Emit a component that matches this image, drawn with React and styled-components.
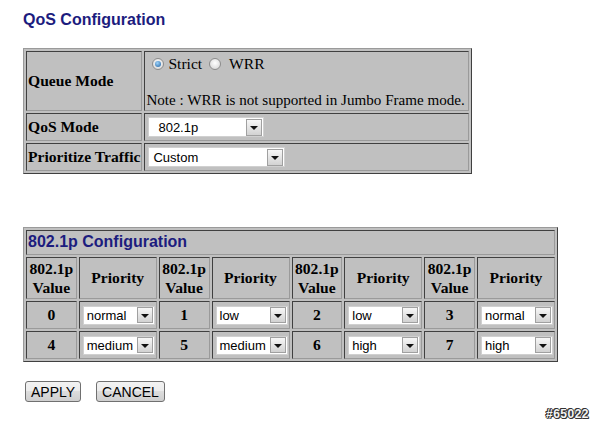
import React from 'react';
import styled, { createGlobalStyle, css } from 'styled-components';

const GlobalStyle = createGlobalStyle`
  body {
    margin: 0;
    background: #fff;
    font-family: "Liberation Serif", "Times New Roman", serif;
  }
`;

const Page = styled.div`
  width: 593px;
  height: 422px;
  padding: 11px 0 0 23px;
  box-sizing: border-box;
`;

const Title = styled.h1`
  margin: 0;
  font: bold 16px/18px "Liberation Sans", Arial, sans-serif;
  color: #1c1c7e;
`;

const Grid = styled.table`
  border-collapse: separate;
  border-spacing: 2px;
  background: #c0c0c0;
  border: 1px solid;
  border-color: #9a9a9a #404040 #404040 #9a9a9a;
  margin-top: ${p => p.$top}px;
  width: ${p => p.$width}px;
`;

const Row = styled.tr`
  & > td {
    height: ${p => p.$h}px;
  }
`;

const Cell = styled.td`
  border: 1px solid;
  border-color: #404040 #9a9a9a #9a9a9a #404040;
  padding: 1px;
  font-size: 15.6px;
  color: #000;
  white-space: nowrap;
  vertical-align: middle;
  text-align: ${p => p.$align || 'left'};
  font-weight: ${p => (p.$bold ? 'bold' : 'normal')};
  width: ${p => (p.$w ? `${p.$w}px` : 'auto')};
  line-height: ${p => p.$lh || 'normal'};
`;

const SectionHead = styled.td`
  border: 1px solid;
  border-color: #404040 #9a9a9a #9a9a9a #404040;
  padding: 2px 1px 3px;
  font: bold 16px "Liberation Sans", Arial, sans-serif;
  color: #1c1c7e;
`;

const RadioLine = styled.div`
  display: flex;
  align-items: center;
  height: 18px;
  margin-top: 2px;
`;

const Radio = styled.span`
  display: inline-block;
  width: 12px;
  height: 12px;
  border-radius: 50%;
  border: 1px solid #8c8c8c;
  box-sizing: border-box;
  position: relative;
  margin: 0 4px 0 ${p => p.$left}px;
  background: radial-gradient(circle at 50% 40%, #ffffff, #d0d0d0);
  ${p =>
    p.$checked &&
    css`
      &::after {
        content: '';
        position: absolute;
        inset: 2px;
        border-radius: 50%;
        background: radial-gradient(circle at 40% 35%, #9ed4fb, #1f5f9f);
      }
    `}
`;

const Note = styled.div`
  margin-top: 19px;
  padding-right: 2px;
  font-size: 15.1px;
`;

const SelectBox = styled.div`
  display: inline-flex;
  align-items: center;
  vertical-align: middle;
  width: ${p => p.$width}px;
  height: ${p => p.$height}px;
  box-sizing: border-box;
  background: #fff;
  border: 1px solid #d0d0d0;
  font: 13px "Liberation Sans", Arial, sans-serif;
  color: #000;
  margin-left: 2px;
`;

const SelectText = styled.span`
  flex: 1;
  padding-left: ${p => p.$indent}px;
`;

const ArrowButton = styled.span`
  display: flex;
  align-items: center;
  justify-content: center;
  width: 16px;
  height: ${p => p.$size}px;
  margin-right: 1px;
  box-sizing: border-box;
  border: 1px solid #a0a0a0;
  background: linear-gradient(#f7f7f7, #d2d2d2);

  &::after {
    content: '';
    margin-top: 1px;
    border-left: 4px solid transparent;
    border-right: 4px solid transparent;
    border-top: 4px solid #111;
  }
`;

const Buttons = styled.div`
  display: flex;
  gap: 15px;
  margin: 19px 0 0 2px;
`;

const Button = styled.button`
  height: 21px;
  padding: 0 5px;
  font: 14px "Liberation Sans", Arial, sans-serif;
  color: #000;
  border: 1px solid #707070;
  border-radius: 3px;
  background: linear-gradient(#f3f3f3, #ebebeb 50%, #dddddd 50%, #cfcfcf);
`;

const Mark = styled.div`
  margin-top: 5px;
  padding-right: 4px;
  text-align: right;
  font: bold 12px "Liberation Sans", Arial, sans-serif;
  color: #f4f4f4;
  text-shadow: 1px 0 #333, -1px 0 #333, 0 1px #333, 0 -1px #333, 1px 1px #333, -1px -1px #333;
  letter-spacing: 0.5px;
`;

const Select = ({ value, width, height = 20, indent = 3 }) => (
  <SelectBox $width={width} $height={height}>
    <SelectText $indent={indent}>{value}</SelectText>
    <ArrowButton $size={height - 3} />
  </SelectBox>
);

const priorities = [
  ['0', 'normal', '1', 'low', '2', 'low', '3', 'normal'],
  ['4', 'medium', '5', 'medium', '6', 'high', '7', 'high'],
];

export default function App() {
  return (
    <Page>
      <GlobalStyle />
      <Title>QoS Configuration</Title>

      <Grid $top={19} $width={445}>
        <tbody>
          <tr>
            <Cell $bold $w={110}>Queue Mode</Cell>
            <Cell>
              <RadioLine>
                <Radio $checked $left={6} />
                Strict
                <Radio $left={7} />
                &nbsp;WRR
              </RadioLine>
              <Note>Note : WRR is not supported in Jumbo Frame mode.</Note>
            </Cell>
          </tr>
          <Row $h={24}>
            <Cell $bold>QoS Mode</Cell>
            <Cell>
              <Select value="802.1p" width={116} indent={9} />
            </Cell>
          </Row>
          <Row $h={24}>
            <Cell $bold>Prioritize Traffic</Cell>
            <Cell>
              <Select value="Custom" width={137} indent={4} />
            </Cell>
          </Row>
        </tbody>
      </Grid>

      <Grid $top={53} $width={535}>
        <tbody>
          <tr>
            <SectionHead colSpan={8}>802.1p Configuration</SectionHead>
          </tr>
          <tr>
            {[0, 1, 2, 3].map(i => (
              <React.Fragment key={i}>
                <Cell $bold $align="center" $lh="19px" $w={47}>
                  802.1p
                  <br />
                  Value
                </Cell>
                <Cell $bold $align="center">Priority</Cell>
              </React.Fragment>
            ))}
          </tr>
          {priorities.map((row, r) => (
            <Row $h={24} key={r}>
              {row.map((v, i) =>
                i % 2 === 0 ? (
                  <Cell $bold $align="center" key={i}>{v}</Cell>
                ) : (
                  <Cell key={i}>
                    <Select value={v} width={72} height={19} indent={3} />
                  </Cell>
                )
              )}
            </Row>
          ))}
        </tbody>
      </Grid>

      <Buttons>
        <Button>APPLY</Button>
        <Button>CANCEL</Button>
      </Buttons>

      <Mark>#65022</Mark>
    </Page>
  );
}
